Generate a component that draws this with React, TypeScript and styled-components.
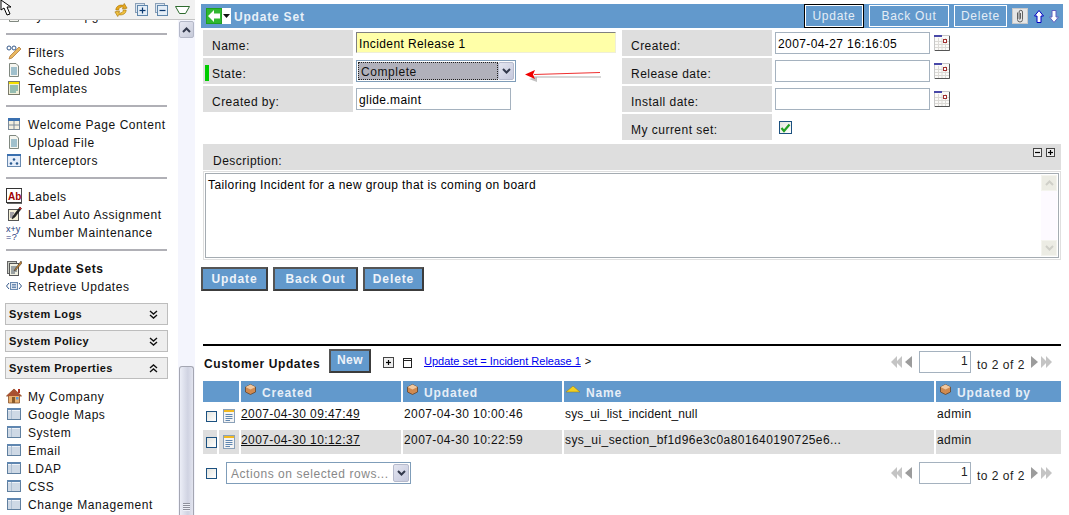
import React from "react";
import styled, { createGlobalStyle } from "styled-components";

const Global = createGlobalStyle`
  html, body { margin: 0; padding: 0; background: #fff; overflow: hidden; }
  body { font-family: "Liberation Sans", Arial, sans-serif; font-size: 12px; color: #000; letter-spacing: 0.4px; }
  * { box-sizing: border-box; }
`;

const Page = styled.div`display: flex; width: 1069px; height: 515px; overflow: hidden;`;
const Sidebar = styled.aside`width: 195px; height: 515px; display: flex; flex-direction: column; flex: none; overflow: hidden; letter-spacing: 0.55px;`;
const TopBar = styled.div`
  height: 20px; flex: none; background: #f1f1f1; border-bottom: 1px solid #c4c4c4; display: flex; align-items: center;
  position: relative; z-index: 1;
`;
const TopIcons = styled.div`display: flex; align-items: center; margin-left: 114px; gap: 7px;`;
const SideBody = styled.div`flex: 1; display: flex; min-height: 0;`;
const SideList = styled.div`width: 178px; flex: none; overflow: hidden;`;
const Group = styled.div<{ $first?: boolean }>`
  margin: ${(p) => (p.$first ? "-14px 0 0 0" : "0")};
  padding: ${(p) => (p.$first ? "0 0 9px" : "8px 0")};
`;
const Sep = styled.div`height: 2px; margin: 0 11px 0 6px; background: #b0b0b6;`;
const SideRow = styled.div<{ $bold?: boolean }>`
  height: 18px; display: flex; align-items: center; padding: 2px 0 0 6px; gap: 6px; white-space: nowrap;
  font-weight: ${(p) => (p.$bold ? 700 : 400)};
  color: #111;
  svg { flex: none; margin-top: -2px; }
`;
const SectionHead = styled.div`
  height: 22px; margin: 0 10px 5px 5px; background: #eeeeee; border: 1px solid #bdbdbd; display: flex; align-items: center;
  justify-content: space-between; padding: 0 9px 0 3px; font-weight: 700; font-size: 11px; letter-spacing: 0.42px; color: #111;
`;
const SectionWrap = styled.div`padding-top: 8px;`;
const PropsList = styled.div`padding-top: 3px;`;
const Scrollbar = styled.div`
  width: 17px; flex: none; background: #f4f5fd; display: flex; flex-direction: column; align-items: center;
`;
const ScrollUp = styled.div`
  width: 15px; height: 17px; margin-top: 1px; background: linear-gradient(135deg,#e8e9f3,#c6cad9); border: 1px solid #b4b8c8; border-radius: 2px;
  display: flex; align-items: center; justify-content: center;
`;
const ScrollSpace = styled.div`flex: 1;`;
const ScrollThumb = styled.div`
  width: 15px; height: 149px; border: 1px solid #a4a6b2; border-bottom: none; border-radius: 3px 3px 0 0;
  background: linear-gradient(90deg,#eceef7,#d0d3e2 60%,#e2e4ef);
  display: flex; align-items: flex-end; justify-content: center; padding-bottom: 4px;
`;
const Grip = styled.div`width: 7px; height: 8px; background: repeating-linear-gradient(180deg,#8e909c 0 1px,#eef0f8 1px 2px);`;

const Main = styled.main`width: 862px; margin-left: 6px; padding-top: 4px; flex: none;`;
const HeaderBar = styled.div`height: 24px; background: #6299cc; display: flex; align-items: center; padding: 0 4px 0 5px;`;
const BackBtn = styled.div`display: flex; align-items: center; width: 25px; height: 16px; background: #fff;`;
const Title = styled.div`margin: 1px 0 0 3px; font-weight: 700; color: #e8f0f8; flex: 1; letter-spacing: 0.8px;`;
const HeadButton = styled.div<{ $w: number; $focus?: boolean }>`
  width: ${(p) => p.$w}px; height: 22px; margin-right: ${(p) => (p.$focus ? 6 : 5)}px; display: flex; align-items: center; justify-content: center;
  color: #e4edf6; background: #6299cc; border: 1px solid #fff; letter-spacing: 0.72px;
  box-shadow: ${(p) => (p.$focus ? "0 0 0 1px #000" : "none")};
`;
const Clip = styled.div`width: 16px; height: 16px; background: #e6e6e6; border: 1px solid #c8c8c8; display: flex; align-items: center; justify-content: center; margin-right: 6px;`;
const NavArrows = styled.div`display: flex; gap: 5px;`;

const FormGrid = styled.div`
  margin: 2px 0 0 2px; width: 858px; display: grid; grid-template-columns: 150px 269px 150px 289px; grid-auto-rows: 26px; row-gap: 2px;
`;
const Label = styled.div`
  background: #dedede; padding: 9px 0 0 9px; position: relative; color: #111; letter-spacing: 0.48px;
`;
const Marker = styled.span`position: absolute; left: 2px; top: 7px; width: 4px; height: 16px; background: #00cc00;`;
const Field = styled.div`padding: 2px 0 0 3px; display: flex; align-items: flex-start; position: relative;`;
const Input = styled.div<{ $w: number; $yellow?: boolean }>`
  width: ${(p) => p.$w}px; height: ${(p) => (p.$yellow ? 21 : 22)}px; padding: 2px 0 0 2px; display: flex; align-items: center; white-space: nowrap;
  background: ${(p) => (p.$yellow ? "#ffffa8" : "#fff")};
  border: 1px solid ${(p) => (p.$yellow ? "#efefd8" : "#a5b2bf")};
  border-top-color: ${(p) => (p.$yellow ? "#808080" : "#a5b2bf")};
  border-left-color: ${(p) => (p.$yellow ? "#808080" : "#a5b2bf")};
`;
const Select = styled.div<{ $w: number; $muted?: boolean }>`
  width: ${(p) => p.$w}px; height: 22px; border: 1px solid #7f9db9; background: #fff; display: flex; padding: 1px;
  color: ${(p) => (p.$muted ? "#888" : "#111")}; letter-spacing: 0.55px;
`;
const SelectValue = styled.div<{ $focus?: boolean }>`
  flex: 1; display: flex; align-items: center; padding: 2px 0 0 2px; white-space: nowrap; overflow: hidden;
  background: ${(p) => (p.$focus ? "#b1b1bb" : "#fff")};
  border: 1px ${(p) => (p.$focus ? "dotted #222" : "solid transparent")};
`;
const SelectBtn = styled.div`
  width: 16px; flex: none; background: linear-gradient(135deg,#e3e5f0,#c6c9dd); border: 1px solid #b6bacc; border-radius: 2px;
  display: flex; align-items: center; justify-content: center;
`;
const CalIcon = styled.span`margin: 3px 0 0 4px; display: flex;`;
const ArrowMark = styled.svg`position: absolute; left: 172px; top: 9px;`;
const Checkbox = styled.span<{ $small?: boolean }>`
  width: ${(p) => (p.$small ? 11 : 13)}px; height: ${(p) => (p.$small ? 11 : 13)}px; border: 1px solid #1c5180; background: linear-gradient(135deg,#e4e4de,#fff); display: flex; flex: none;
  align-items: center; justify-content: center;
`;
const CheckCell = styled(Field)`padding: 7px 0 0 7px;`;

const DescHead = styled.div`
  margin: 4px 0 0 2px; width: 858px; height: 26px; background: #dedede; padding: 10px 6px 0 10px; display: flex; justify-content: space-between; color: #111; letter-spacing: 0.48px;
`;
const ExpandBtns = styled.div`display: flex; gap: 4px; margin-top: -6px;`;
const MiniBox = styled.span<{ $size?: number }>`width: ${(p) => p.$size ?? 9}px; height: ${(p) => p.$size ?? 9}px; border: 1px solid #444; background: #eee; display: flex; align-items: center; justify-content: center;`;
const TextWrap = styled.div`margin: 1px 0 0 2px; width: 858px; height: 89px; border: 1px solid #dfdfdf; padding: 1px;`;
const TextBox = styled.div`height: 85px; border: 1px solid #a5acb2; display: flex; justify-content: space-between; padding: 4px 1px 1px 2px;`;
const TextScroll = styled.div`width: 16px; margin: -3px 0 0; background: #fdfaff; display: flex; flex-direction: column; justify-content: space-between;`;
const FadeBtn = styled.div`height: 16px; background: #ececE4; border: 1px solid #f4f4ee; display: flex; align-items: center; justify-content: center;`;
const BtnRow = styled.div`display: flex; gap: 5px; margin-top: 7px;`;
const SolidBtn = styled.div<{ $w: number }>`
  width: ${(p) => p.$w}px; height: 24px; background: #6299cc; border: 2px solid #3c3c3c; border-top-color: #555; border-left-color: #555;
  color: #eef3f9; font-weight: 700; display: flex; align-items: center; justify-content: center; letter-spacing: 0.9px;
`;
const Rule = styled.div`height: 2px; width: 858px; margin: 53px 0 0 2px; background: #000;`;
const ListBar = styled.div`margin: 3px 0 0 3px; width: 857px; height: 32px; display: flex; align-items: flex-start;`;
const ListTitle = styled.div`font-weight: 700; margin-top: 8px; width: 125px; color: #111; letter-spacing: 0.6px;`;
const NewBtn = styled(SolidBtn)`margin-top: 0; letter-spacing: 0.5px; padding-bottom: 2px;`;
const PlainIcons = styled.div`display: flex; align-items: center; margin: 8px 0 0 12px; gap: 9px;`;
const Crumb = styled.a`margin: 6px 0 0 12px; color: #0000ee; text-decoration: underline; font-size: 11px; letter-spacing: 0;`;
const CrumbEnd = styled.span`margin: 6px 0 0 4px; font-size: 11px;`;
const Pager = styled.div<{ $top?: number }>`
  margin-left: auto; margin-top: ${(p) => p.$top ?? 2}px; margin-right: 9px; display: flex; align-items: center; color: #222;
`;
const PagerInput = styled.div`
  width: 52px; height: 22px; margin: 0 6px 0 7px; border: 1px solid #a5b2bf; text-align: right; padding: 2px 2px 0 0;
`;
const PagerText = styled.span`width: 47px; margin-right: 7px; white-space: nowrap; letter-spacing: 0.5px; padding-top: 6px;`;
const Table = styled.div`
  margin-left: 2px; width: 858px; display: grid; grid-template-columns: 14px 20px 160px 159px 370px 125px; column-gap: 2px; row-gap: 2px;
`;
const Th = styled.div<{ $span?: number; $pad?: number }>`
  height: 21px; background: #6299cc; color: #e6eef7; font-weight: 700; display: flex; align-items: center; padding: 3px 0 0 ${(p) => p.$pad ?? 4}px; gap: 6px; letter-spacing: 0.85px;
  grid-column: span ${(p) => p.$span ?? 1};
  svg { margin-top: -7px; }
`;
const Td = styled.div<{ $alt?: boolean; $pad?: number; $ls?: number }>`
  height: 24px; background: ${(p) => (p.$alt ? "#dedede" : "#fff")}; padding: 3px 0 0 ${(p) => p.$pad ?? 1}px; white-space: nowrap; overflow: hidden; color: #111;
  letter-spacing: ${(p) => p.$ls ?? 0.4}px;
`;
const DateLink = styled.a`color: #111; text-decoration: underline;`;
const IconCell = styled(Td)`padding: 5px 0 0 4px;`;
const CheckTd = styled(Td)`padding: 7px 0 0 3px;`;
const ActionsRow = styled.div`margin: 8px 0 0 3px; width: 857px; height: 24px; display: flex; align-items: flex-start;`;
const ActionsCheck = styled(Checkbox)`margin: 6px 9px 0 2px;`;

/* Icons */
const CursorSvg = styled.svg`flex: none; position: absolute; left: 0; top: 0;`;
const Cursor = () => (
  <CursorSvg width="13" height="16" viewBox="0 0 13 16">
    <path d="M1 0 L1 10 L4 8 L7 15 L10 14 L7 7 L11 7 Z" fill="#fff" stroke="#000" strokeWidth="1" />
  </CursorSvg>
);
const Sync = () => (
  <svg width="14" height="16" viewBox="0 0 15 16">
    <path d="M2 8 C2 4 6 2 10 3 L11 1 L14 6 L9 7 L10 5 C7 4 5 6 5 8 Z" fill="#e8a820" stroke="#a87808" strokeWidth=".7" />
    <path d="M13 8 C13 12 9 14 5 13 L4 15 L1 10 L6 9 L5 11 C8 12 10 10 10 8 Z" fill="#f0c040" stroke="#a87808" strokeWidth=".7" />
  </svg>
);
const BoxIcon = ({ plus }: { plus?: boolean }) => (
  <svg width="13" height="13" viewBox="0 0 13 13">
    <rect x=".5" y=".5" width="9" height="9" fill="#dde6f0" stroke="#8aa0b8" />
    <rect x="2.5" y="2.5" width="10" height="10" fill="#e4edf6" stroke="#5f86ab" />
    <path d="M4.5 7.5 H10.5" stroke="#0c3a70" strokeWidth="1.2" />
    {plus && <path d="M7.5 4.5 V10.5" stroke="#0c3a70" strokeWidth="1.2" />}
  </svg>
);
const Tri = () => (
  <svg width="15" height="8" viewBox="0 0 15 8">
    <path d="M.5 .5 H14.5 L10.5 7.5 H4.5 Z" fill="#fff" stroke="#2d6a2d" strokeWidth="1" />
  </svg>
);
const Glasses = () => (
  <svg width="16" height="16" viewBox="0 0 16 16">
    <circle cx="3" cy="4" r="2" fill="none" stroke="#36598a" />
    <circle cx="8" cy="4" r="2" fill="none" stroke="#36598a" />
    <path d="M15 5 L6 14 L3 15 L4 12 L13 3 Z" fill="#e8b860" stroke="#a87030" strokeWidth=".7" />
  </svg>
);
const Doc = () => (
  <svg width="16" height="16" viewBox="0 0 16 16">
    <path d="M3.5 1.5 H10 L12.5 4 V14.5 H3.5 Z" fill="#f6f6f0" stroke="#808880" />
    <path d="M5 6 H11 M5 8 H11 M5 10 H11 M5 12 H11" stroke="#4a8aa8" />
  </svg>
);
const Template = () => (
  <svg width="16" height="16" viewBox="0 0 16 16">
    <rect x="2.5" y="1.5" width="11" height="13" fill="#f0efd8" stroke="#7a7a6a" />
    <rect x="3" y="2" width="10" height="2" fill="#f4e000" />
    <path d="M4 6 H12 M4 8 H12 M4 10 H12 M4 12 H10" stroke="#3a8a8a" />
  </svg>
);
const Panes = () => (
  <svg width="16" height="16" viewBox="0 0 16 16">
    <rect x="2.5" y="2.5" width="11" height="11" fill="#f2efe0" stroke="#7a8a9a" />
    <rect x="2" y="2" width="12" height="3" fill="#3a70b0" />
    <path d="M8 5 V14 M3 9 H14" stroke="#7a8a9a" />
  </svg>
);
const Intercept = () => (
  <svg width="16" height="16" viewBox="0 0 16 16">
    <rect x="1.5" y="2.5" width="13" height="12" fill="#e6eefa" stroke="#6a8ab0" />
    <rect x="1" y="2" width="14" height="2" fill="#3a70b0" />
    <circle cx="8" cy="7.5" r="1.3" fill="#2a5a90" />
    <circle cx="5" cy="11.5" r="1.3" fill="#2a5a90" />
    <circle cx="11" cy="11.5" r="1.3" fill="#2a5a90" />
  </svg>
);
const LabelIcon = () => (
  <svg width="16" height="16" viewBox="0 0 16 16">
    <rect x=".5" y=".5" width="15" height="14" fill="#fff" stroke="#333" />
    <path d="M1 15.5 H16 V1" stroke="#666" fill="none" />
    <text x="2" y="12" fontFamily="Liberation Sans" fontSize="10" fontWeight="700" fill="#a00000" letterSpacing="0">Ab</text>
  </svg>
);
const LabelAuto = () => (
  <svg width="16" height="16" viewBox="0 0 16 16">
    <rect x="2.5" y="3.5" width="10" height="11" fill="#f4f0d8" stroke="#555" />
    <path d="M4 7 H8 M4 9 H7 M4 11 H7" stroke="#557" />
    <path d="M14 1 L7 10 L6 13 L9 11 L15.5 2.5 Z" fill="#222" stroke="#111" strokeWidth=".5" />
    <path d="M14 1 L13 2.5 L14.5 3.5 L15.5 2.5Z" fill="#e02020" />
  </svg>
);
const Numbers = () => (
  <svg width="16" height="17" viewBox="0 0 16 17">
    <text x="0" y="7.5" fontFamily="Liberation Sans" fontSize="9" fill="#1c3c80" letterSpacing="0">x+y</text>
    <text x="0" y="16" fontFamily="Liberation Sans" fontSize="9" fill="#1c3c80" letterSpacing="0.5">=?</text>
  </svg>
);
const UpdateSets = () => (
  <svg width="16" height="16" viewBox="0 0 16 16">
    <rect x="1.5" y="1.5" width="9" height="12" fill="#c8ccc4" stroke="#666" />
    <rect x="3.5" y="3.5" width="9" height="12" fill="#f0efe0" stroke="#555" />
    <path d="M5 7 H11 M5 9 H11 M5 11 H11 M5 13 H9" stroke="#456" />
    <path d="M15 1 L9 9 L8 11 L10 10 L16 3 Z" fill="#c08030" stroke="#333" strokeWidth=".5" />
  </svg>
);
const Retrieve = () => (
  <svg width="16" height="10" viewBox="0 0 16 10">
    <path d="M3 2 L0.5 5 L3 8 M13 2 L15.5 5 L13 8" fill="none" stroke="#36598a" />
    <rect x="4.5" y="1.5" width="7" height="7" fill="#dfe6f0" stroke="#6a8ab0" />
    <path d="M6 3.5 H10 M6 5 H10 M6 6.5 H10" stroke="#6a8ab0" />
  </svg>
);
const House = () => (
  <svg width="16" height="16" viewBox="0 0 16 16">
    <path d="M8 1 L0.5 8 H2.5 V15 H13.5 V8 H15.5 Z" fill="#e8b070" stroke="#8a5028" strokeWidth=".8" />
    <path d="M8 1 L0.5 8 H15.5 Z" fill="#a85030" />
    <rect x="12" y="1" width="2" height="4" fill="#b03020" />
    <rect x="6" y="9" width="3" height="6" fill="#8a5a28" />
    <rect x="10" y="9" width="2.5" height="2.5" fill="#5a9ad8" />
  </svg>
);
const ListIcon = () => (
  <svg width="16" height="14" viewBox="0 0 16 14">
    <rect x="1.5" y="1.5" width="13" height="11" fill="#eef2f8" stroke="#5f7f9f" />
    <rect x="1" y="1" width="14" height="2" fill="#5f86b0" />
    <path d="M2 5 H14 M2 7 H14 M2 9 H14 M2 11 H14" stroke="#aebfd2" />
    <path d="M5.5 3 V12" stroke="#aebfd2" />
  </svg>
);
const FlipSvg = styled.svg<{ $flip?: boolean }>`transform: ${(p) => (p.$flip ? "scaleY(-1)" : "none")};`;
const Chevrons = ({ up }: { up?: boolean }) => (
  <FlipSvg $flip={up} width="9" height="9" viewBox="0 0 9 9">
    <path d="M1 1 L4.5 4 L8 1 M1 5 L4.5 8 L8 5" fill="none" stroke="#111" strokeWidth="1.4" />
  </FlipSvg>
);
const Caret = ({ up, color = "#33394c" }: { up?: boolean; color?: string }) => (
  <FlipSvg $flip={up} width="9" height="6" viewBox="0 0 9 6">
    <path d="M1 1 L4.5 4.5 L8 1" fill="none" stroke={color} strokeWidth="2" />
  </FlipSvg>
);
const Calendar = () => (
  <svg width="16" height="16" viewBox="0 0 16 16">
    <rect x=".5" y=".5" width="15" height="15" fill="#fbfaf8" stroke="#c8c8c8" />
    <path d="M1 6.5 H15 M1 9.5 H15 M1 12.5 H15 M4.5 3 V15 M8 3 V15 M11.5 3 V15" stroke="#dcdad6" />
    <path d="M15.5 1 V15.5 H1" fill="none" stroke="#555" />
    <rect x="0" y="0" width="8" height="2" fill="#4848a8" />
    <rect x="9.5" y="4.5" width="3" height="3" fill="#fff" stroke="#a03030" />
  </svg>
);
const BackArrow = () => (
  <svg width="16" height="16" viewBox="0 0 16 16">
    <rect width="16" height="16" fill="#1fa01f" />
    <rect x="1" y="1" width="14" height="14" fill="#30b830" />
    <path d="M8 2 L2 8 L8 14 V10.5 H14 V5.5 H8 Z" fill="#fff" />
  </svg>
);
const SmallDown = () => (
  <svg width="9" height="16" viewBox="0 0 9 16"><path d="M1 6 H8 L4.5 10 Z" fill="#111" /></svg>
);
const PaperClip = () => (
  <svg width="10" height="14" viewBox="0 0 10 14">
    <path d="M2.5 3.5 V10.5 a2.5 2.5 0 0 0 5 0 V3 a1.7 1.7 0 0 0 -3.4 0 V9.5 a.7 .7 0 0 0 1.4 0 V4" fill="none" stroke="#606060" strokeWidth="1" />
  </svg>
);
const NavArrow = ({ down }: { down?: boolean }) => (
  <svg width="10" height="13" viewBox="0 0 10 13">
    {down ? (
      <path d="M3 .5 H7 V7 H9.5 L5 12.5 L.5 7 H3 Z" fill="#fff" stroke="#6060c0" />
    ) : (
      <path d="M3 12.5 H7 V6 H9.5 L5 .5 L.5 6 H3 Z" fill="#fff" stroke="#0000c0" />
    )}
  </svg>
);
const Red = () => (
  <ArrowMark width="80" height="16" viewBox="0 0 80 16">
    <path d="M8 10 H76" stroke="#b8b8b8" strokeWidth="2" opacity=".55" />
    <path d="M4 12 L12 10 L12 15 Z" fill="#999" opacity=".6" />
    <path d="M9 7.5 L75 5.5" stroke="#ee3030" strokeWidth="1.2" />
    <path d="M0 7.5 L10 3 L8 7.5 L10 12 Z" fill="#f00000" />
  </ArrowMark>
);
const Cube = () => (
  <svg width="11" height="11" viewBox="0 0 11 11">
    <path d="M5.5 .5 L10.5 3 V8 L5.5 10.5 L.5 8 V3 Z" fill="#d08a50" stroke="#5a3a20" strokeWidth=".7" />
    <path d="M.5 3 L5.5 5.5 L10.5 3 L5.5 .5 Z" fill="#f0c8a0" />
  </svg>
);
const GoldTri = () => (
  <svg width="14" height="7" viewBox="0 0 14 7">
    <path d="M7 0 L14 6 H0 Z" fill="#f4d020" stroke="#8a7820" strokeWidth=".5" />
  </svg>
);
const Mini = ({ plus, size }: { plus?: boolean; size?: number }) => (
  <MiniBox $size={size}>
    <svg width="7" height="7" viewBox="0 0 7 7">
      <path d="M1 3.5 H6" stroke="#000" strokeWidth="1.2" />
      {plus && <path d="M3.5 1 V6" stroke="#000" strokeWidth="1.2" />}
    </svg>
  </MiniBox>
);
const Check = () => (
  <svg width="11" height="10" viewBox="0 0 11 10">
    <path d="M1.5 5 L4 8 L9.5 1.5" fill="none" stroke="#22a022" strokeWidth="2.2" />
  </svg>
);
const RowDoc = () => (
  <svg width="13" height="15" viewBox="0 0 13 15">
    <rect x=".5" y=".5" width="11" height="13" fill="#f4f4f4" stroke="#8aa0b8" />
    <rect x="1" y="1" width="10" height="2" fill="#f0b820" />
    <path d="M2.5 5.5 H9.5 M2.5 7.5 H9.5 M2.5 9.5 H9.5 M2.5 11.5 H7" stroke="#5f86b0" />
  </svg>
);
const ColIcon = () => (
  <svg width="9" height="10" viewBox="0 0 9 10">
    <rect x=".5" y=".5" width="8" height="9" fill="#fff" stroke="#222" />
    <path d="M1 2.5 H8" stroke="#222" />
  </svg>
);
const PageSvg = styled.svg<{ $next?: boolean }>`flex: none; transform: ${(p) => (p.$next ? "scaleX(-1)" : "none")};`;
const PageArrows = ({ next }: { next?: boolean }) => (
  <PageSvg $next={next} width="21" height="12" viewBox="0 0 21 12">
    <path d="M6 0 L0 6 L6 12 Z M11 0 L5 6 L11 12 Z" fill="#c4c4c4" />
    <path d="M21 0 L14 6 L21 12 Z" fill="#9c9c9c" />
  </PageSvg>
);

const groups: [React.ReactNode, string][][] = [
  [[<Glasses />, "Filters"], [<Doc />, "Scheduled Jobs"], [<Template />, "Templates"]],
  [[<Panes />, "Welcome Page Content"], [<Doc />, "Upload File"], [<Intercept />, "Interceptors"]],
  [[<LabelIcon />, "Labels"], [<LabelAuto />, "Label Auto Assignment"], [<Numbers />, "Number Maintenance"]],
];
const props: [React.ReactNode, string][] = [
  [<House />, "My Company"], [<ListIcon />, "Google Maps"], [<ListIcon />, "System"], [<ListIcon />, "Email"],
  [<ListIcon />, "LDAP"], [<ListIcon />, "CSS"], [<ListIcon />, "Change Management"],
];
const rows = [
  { c: "2007-04-30 09:47:49", u: "2007-04-30 10:00:46", n: "sys_ui_list_incident_null", ls: 0.15, alt: false },
  { c: "2007-04-30 10:12:37", u: "2007-04-30 10:22:59", n: "sys_ui_section_bf1d96e3c0a801640190725e6...", ls: 0.42, alt: true },
];

const PagerBlock = ({ top }: { top?: number }) => (
  <Pager $top={top}>
    <PageArrows />
    <PagerInput>1</PagerInput>
    <PagerText>to 2 of 2</PagerText>
    <PageArrows next />
  </Pager>
);

export default function App() {
  return (
    <Page>
      <Global />
      <Sidebar>
        <TopBar>
          <Cursor />
          <TopIcons>
            <Sync />
            <BoxIcon plus />
            <BoxIcon />
            <Tri />
          </TopIcons>
        </TopBar>
        <SideBody>
          <SideList>
            <Group $first>
              <SideRow><Doc />System Upgrades</SideRow>
            </Group>
            {groups.map((g) => (
              <React.Fragment key={g[0][1]}>
                <Sep />
                <Group>
                  {g.map(([icon, t]) => <SideRow key={t}>{icon}{t}</SideRow>)}
                </Group>
              </React.Fragment>
            ))}
            <Sep />
            <Group>
              <SideRow $bold><UpdateSets />Update Sets</SideRow>
              <SideRow><Retrieve />Retrieve Updates</SideRow>
              <SectionWrap>
                <SectionHead>System Logs<Chevrons /></SectionHead>
                <SectionHead>System Policy<Chevrons /></SectionHead>
                <SectionHead>System Properties<Chevrons up /></SectionHead>
              </SectionWrap>
              <PropsList>
                {props.map(([icon, t]) => <SideRow key={t}>{icon}{t}</SideRow>)}
              </PropsList>
            </Group>
          </SideList>
          <Scrollbar>
            <ScrollUp><Caret up /></ScrollUp>
            <ScrollSpace />
            <ScrollThumb><Grip /></ScrollThumb>
          </Scrollbar>
        </SideBody>
      </Sidebar>
      <Main>
        <HeaderBar>
          <BackBtn><BackArrow /><SmallDown /></BackBtn>
          <Title>Update Set</Title>
          <HeadButton $w={58} $focus>Update</HeadButton>
          <HeadButton $w={80}>Back Out</HeadButton>
          <HeadButton $w={53}>Delete</HeadButton>
          <Clip><PaperClip /></Clip>
          <NavArrows><NavArrow /><NavArrow down /></NavArrows>
        </HeaderBar>
        <FormGrid>
          <Label>Name:</Label>
          <Field><Input $w={260} $yellow>Incident Release 1</Input></Field>
          <Label>Created:</Label>
          <Field><Input $w={155}>2007-04-27 16:16:05</Input><CalIcon><Calendar /></CalIcon></Field>

          <Label><Marker />State:</Label>
          <Field>
            <Select $w={160}>
              <SelectValue $focus>Complete</SelectValue>
              <SelectBtn><Caret /></SelectBtn>
            </Select>
            <Red />
          </Field>
          <Label>Release date:</Label>
          <Field><Input $w={155} /><CalIcon><Calendar /></CalIcon></Field>

          <Label>Created by:</Label>
          <Field><Input $w={155}>glide.maint</Input></Field>
          <Label>Install date:</Label>
          <Field><Input $w={155} /><CalIcon><Calendar /></CalIcon></Field>

          <div />
          <div />
          <Label>My current set:</Label>
          <CheckCell><Checkbox><Check /></Checkbox></CheckCell>
        </FormGrid>
        <DescHead>
          Description:
          <ExpandBtns><Mini /><Mini plus /></ExpandBtns>
        </DescHead>
        <TextWrap>
          <TextBox>
            Tailoring Incident for a new group that is coming on board
            <TextScroll>
              <FadeBtn><Caret up color="#cfcfc8" /></FadeBtn>
              <FadeBtn><Caret color="#cfcfc8" /></FadeBtn>
            </TextScroll>
          </TextBox>
        </TextWrap>
        <BtnRow>
          <SolidBtn $w={67}>Update</SolidBtn>
          <SolidBtn $w={85}>Back Out</SolidBtn>
          <SolidBtn $w={61}>Delete</SolidBtn>
        </BtnRow>
        <Rule />
        <ListBar>
          <ListTitle>Customer Updates</ListTitle>
          <NewBtn $w={42}>New</NewBtn>
          <PlainIcons><Mini plus size={11} /><ColIcon /></PlainIcons>
          <Crumb>Update set = Incident Release 1</Crumb>
          <CrumbEnd>&gt;</CrumbEnd>
          <PagerBlock />
        </ListBar>
        <Table>
          <Th $span={2} />
          <Th><Cube />Created</Th>
          <Th><Cube />Updated</Th>
          <Th $pad={2}><GoldTri />Name</Th>
          <Th><Cube />Updated by</Th>
          {rows.map((r) => (
            <React.Fragment key={r.c}>
              <CheckTd $alt={r.alt}><Checkbox $small /></CheckTd>
              <IconCell $alt={r.alt}><RowDoc /></IconCell>
              <Td $alt={r.alt} $pad={0}><DateLink>{r.c}</DateLink></Td>
              <Td $alt={r.alt}>{r.u}</Td>
              <Td $alt={r.alt} $ls={r.ls}>{r.n}</Td>
              <Td $alt={r.alt}>admin</Td>
            </React.Fragment>
          ))}
        </Table>
        <ActionsRow>
          <ActionsCheck $small />
          <Select $w={185} $muted>
            <SelectValue>Actions on selected rows...</SelectValue>
            <SelectBtn><Caret /></SelectBtn>
          </Select>
          <PagerBlock top={0} />
        </ActionsRow>
      </Main>
    </Page>
  );
}
